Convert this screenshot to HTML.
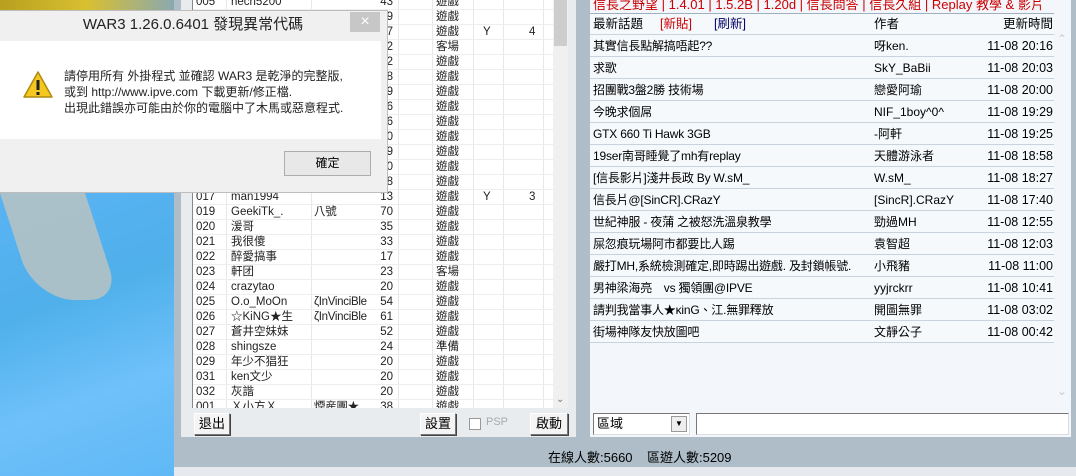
<!DOCTYPE html>
<html><head><meta charset="utf-8"><style>
*{margin:0;padding:0;box-sizing:border-box}
body{width:1076px;height:476px;overflow:hidden;position:relative;background:#aabac5;font-family:"Liberation Sans","Noto Sans CJK TC",sans-serif;font-size:12px;color:#000}
.abs{position:absolute}
.desk{left:0;top:0;width:174px;height:476px;background:linear-gradient(160deg,#6cc0f8 0%,#58b2f2 40%,#4fb0ea 60%,#6fc1fa 80%,#5fb8f5 100%)}
.flower{left:0;top:0;width:174px;height:12px;background:linear-gradient(90deg,#b8a020,#d8c030 50%,#8aa8b0)}
.stem{left:12px;top:160px;width:85px;height:140px;background:#b4c2c4;border-radius:0 0 30px 40px;transform:skewX(18deg);opacity:.9}
.frame{left:174px;top:0;width:902px;height:467px;background:#aebdc8}
.bstrip{left:174px;top:467px;width:902px;height:9px;background:#e6eaee}
.lpanel{left:181px;top:0;width:395px;height:437px;background:#e9ecef}
.list{left:192px;top:0;width:361px;height:408px;background:#fff;overflow:hidden;border-left:1px solid #888}
.row{position:absolute;left:0;width:361px;height:15px;border-bottom:1px solid #eceff2;line-height:15px;font-size:11.5px;color:#222}
.row span{position:absolute;top:0;white-space:nowrap}
.vl{position:absolute;top:0;height:408px;width:1px;background:#e6e8ea}
.sb{left:553px;top:0;width:15px;height:408px;background:#f0f0f0}
.btn{position:absolute;background:#f4f4f4;border:1px solid #777;border-top-color:#fff;border-left-color:#fff;box-shadow:1px 1px 0 #444;font-size:13px;text-align:center;line-height:20px}
.rpanel{left:590px;top:0;width:481px;height:437px;background:#f3f6fa}
.rrow{position:absolute;left:590px;width:464px;height:22px;border-bottom:1px solid #c9d3dd;background:#f6f9fc;font-size:12px;line-height:22px}
.rrow span{position:absolute;top:0;white-space:nowrap}
.dlg{left:-2px;top:10px;width:390px;height:183px;background:#f0f0f0;border:1px solid #bdbdbd}
</style></head><body>
<div class="abs desk"></div>
<div class="abs flower"></div>
<div class="abs stem"></div>
<div class="abs frame"></div>
<div class="abs bstrip"></div>
<div class="abs lpanel"></div>
<div class="abs list" id="list">
<div class="vl" style="left:33px"></div><div class="vl" style="left:118px"></div><div class="vl" style="left:205px"></div><div class="vl" style="left:239px"></div><div class="vl" style="left:280px"></div><div class="vl" style="left:310px"></div><div class="vl" style="left:350px"></div>
</div>
<div class="abs sb"><div class="abs" style="left:1px;top:0;width:13px;height:46px;background:#cdcdcd"></div><div class="abs" style="left:3px;top:394px;font-size:10px;color:#777">&#8964;</div></div>
<div class="abs" style="left:192px;top:408px;width:376px;height:29px;background:#e9ecef"></div>
<div class="btn" style="left:194px;top:413px;width:36px;height:22px">退出</div>
<div class="btn" style="left:420px;top:413px;width:36px;height:22px">設置</div>
<div class="abs" style="left:469px;top:418px;width:12px;height:12px;border:1px solid #999;background:#fff"></div>
<div class="abs" style="left:486px;top:416px;font-size:11px;color:#aaa">PSP</div>
<div class="btn" style="left:530px;top:413px;width:38px;height:22px">啟動</div>

<div class="abs rpanel"></div>
<div class="abs" style="left:593px;top:-6px;font-size:13px;color:#c00;white-space:nowrap">信長之野望 | 1.4.01 | 1.5.2B | 1.20d | 信長問答 | 信長久組 | Replay 教學 &amp; 影片</div>
<div class="abs" style="left:590px;top:13px;width:464px;height:22px;border-top:1px solid #9fb0bf;border-bottom:1px solid #c9d3dd;background:#f6f9fc;font-size:12.5px;line-height:21px">
<span class="abs" style="left:3px">最新話題</span><span class="abs" style="left:70px;color:#c00">[新貼]</span><span class="abs" style="left:124px;color:#006">[刷新]</span><span class="abs" style="left:284px">作者</span><span class="abs" style="right:1px">更新時間</span></div>
<div id="rrows"></div>
<div class="abs" style="left:1054px;top:14px;width:16px;height:395px;background:#f3f6fa"><div class="abs" style="left:3px;top:18px;font-size:12px;color:#ccc">&#8963;</div><div class="abs" style="left:3px;top:370px;font-size:12px;color:#ccc">&#8964;</div></div>
<div class="abs" style="left:590px;top:408px;width:481px;height:29px;background:#f3f6fa"></div>
<div class="abs" style="left:593px;top:413px;width:97px;height:22px;background:#fff;border:1px solid #777;border-right-color:#ddd;border-bottom-color:#ddd;font-size:13px;line-height:20px;padding-left:3px">區域<div class="abs" style="right:2px;top:2px;width:16px;height:16px;background:#eee;border:1px solid #999;font-size:8px;text-align:center;line-height:14px">&#9660;</div></div>
<div class="abs" style="left:696px;top:413px;width:373px;height:22px;background:#fff;border:1px solid #777;border-right-color:#ddd;border-bottom-color:#ddd"></div>
<div class="abs" style="left:548px;top:447px;font-size:13px;white-space:nowrap">在線人數:5660&nbsp;&nbsp;&nbsp; 區遊人數:5209</div>

<div class="abs dlg">
<div class="abs" style="left:0;top:0;width:388px;height:30px;text-align:center;font-size:15px;line-height:28px;color:#222">WAR3 1.26.0.6401 發現異常代碼</div>
<div class="abs" style="left:351px;top:1px;width:30px;height:20px;background:#c7c7c7;color:#fff;font-size:16px;text-align:center;line-height:19px">×</div>
<div class="abs" style="left:0;top:30px;width:382px;height:98px;background:#fff"></div>
<svg class="abs" style="left:23px;top:59px" width="32" height="30" viewBox="0 0 32 30"><path d="M16 2 L30 27 L2 27 Z" fill="#f4c820" stroke="#b08a10" stroke-width="1.5" stroke-linejoin="round"/><rect x="14.5" y="10" width="3" height="10" fill="#222"/><rect x="14.5" y="22" width="3" height="3" fill="#222"/></svg>
<div class="abs" style="left:65px;top:57px;font-size:12px;line-height:16px;color:#222;white-space:nowrap">請停用所有 外掛程式 並確認 WAR3 是乾淨的完整版,<br>或到 http://www.ipve.com 下載更新/修正檔.<br>出現此錯誤亦可能由於你的電腦中了木馬或惡意程式.</div>
<div class="abs" style="left:285px;top:140px;width:87px;height:25px;background:#e8e8e8;border:1px solid #adadad;font-size:12px;text-align:center;line-height:23px">確定</div>
</div>
<script>
var L=[["005","hech5200","","43","遊戲","",""]];
var hid=[["29"],["37","Y","4"],["72","","","客場"],["32"],["38"],["109"],["16"],["16"],["30"],["29"],["10"],["28"]];
var nums=["006","007","008","009","010","011","012","013","014","015","016","018"];
hid.forEach(function(h,i){L.push([nums[i],"","",h[0],h[3]||"遊戲",h[1]||"",h[2]||""]);});
L.push(["017","man1994","","13","遊戲","Y","3"]);
[["019","GeekiTk_.","八號","70"],["020","湲哥","","35"],["021","我很傻","","33"],["022","醉愛搞事","","17"],["023","軒团","","23","客場"],["024","crazytao","","20"],["025","O.o_MoOn","ζInVinciBle","54"],["026","☆KiNG★生","ζInVinciBle","61"],["027","蒼井空妹妹","","52"],["028","shingsze","","24","準備"],["029","年少不猖狂","","20"],["031","ken文少","","20"],["032","灰諧","","20"],["001","Ｘ小方Ｘ","煙産團★","38"]].forEach(function(r){L.push([r[0],r[1],r[2],r[3],r[4]||"遊戲","",""]);});
var h="";L.forEach(function(r,k){var t=-5+15*k;h+='<div class="row" style="top:'+t+'px"><span style="left:3px">'+r[0]+'</span><span style="left:38px">'+r[1]+'</span><span style="left:121px;letter-spacing:-0.3px">'+r[2]+'</span><span style="left:180px;width:20px;text-align:right">'+r[3]+'</span><span style="left:243px">'+r[4]+'</span><span style="left:290px">'+r[5]+'</span><span style="left:336px">'+r[6]+'</span></div>';});
document.getElementById("list").innerHTML+=h;
var R=[["其實信長點解搞唔起??","呀ken.","11-08 20:16"],["求歌","SkY_BaBii","11-08 20:03"],["招團戰3盤2勝 技術場","戀愛阿瑜","11-08 20:00"],["今晚求個屌","NIF_1boy^0^","11-08 19:29"],["GTX 660 Ti Hawk 3GB","-阿軒","11-08 19:25"],["19ser南哥睡覺了mh有replay","天體游泳者","11-08 18:58"],["[信長影片]淺井長政 By W.sM_","W.sM_","11-08 18:27"],["信長片@[SinCR].CRazY","[SincR].CRazY","11-08 17:40"],["世紀神服 - 夜蒲 之被怒洗溫泉教學","勁過MH","11-08 12:55"],["屎忽痕玩場阿市都要比人踢","袁智超","11-08 12:03"],["嚴打MH,系統檢測確定,即時踢出遊戲. 及封鎖帳號.","小飛豬","11-08 11:00"],["男神梁海亮　vs 獨領團@IPVE","yyjrckrr","11-08 10:41"],["請判我當事人★ĸinG、江.無罪釋放","開圖無罪","11-08 03:02"],["街場神隊友快放圖吧","文靜公子","11-08 00:42"]];
var s="";R.forEach(function(r,i){s+='<div class="rrow" style="top:'+(35+22*i)+'px"><span style="left:3px;letter-spacing:-0.2px">'+r[0]+'</span><span style="left:284px">'+r[1]+'</span><span style="right:1px;font-size:12.5px">'+r[2]+'</span></div>';});
document.getElementById("rrows").innerHTML=s;
</script>
</body></html>
